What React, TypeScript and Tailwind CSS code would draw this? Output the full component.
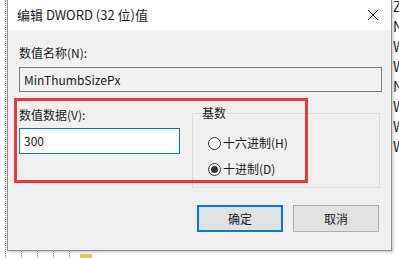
import React from 'react';

const font = "font-['Noto_Sans_CJK_SC','Noto_Sans',sans-serif]";

const Radio = ({ label, checked }: { label: string; checked?: boolean }) => (
  <div className="flex items-center h-[16px]">
    <span className="w-[13px] h-[13px] rounded-full border border-[#333333] bg-white flex items-center justify-center">
      {checked && <span className="w-[7px] h-[7px] rounded-full bg-[#333333]" />}
    </span>
    <span className="ml-[2px] text-[12px] leading-[16px] text-[#1a1a1a]">{label}</span>
  </div>
);

export default function App() {
  const sideLetters = ['Z', 'N', 'W', 'W', 'N', 'W', 'W', 'W'];

  return (
    <div className={`relative w-[399px] h-[258px] overflow-hidden bg-white ${font}`}>
      {/* tree view behind the dialog */}
      <div className="absolute left-[5px] top-0 h-full border-l border-dotted border-[#8a8a8a]" />
      <div className="absolute left-0 top-[251px] w-[120px] h-[7px] flex">
        <span className="ml-[21px] border-l border-dotted border-[#8a8a8a]" />
        <span className="ml-[15px] border-l border-dotted border-[#8a8a8a]" />
        <span className="ml-[15px] border-l border-dotted border-[#8a8a8a]" />
        <span className="ml-[15px] border-l border-dotted border-[#8a8a8a]" />
        <span className="ml-[10px] mt-[3px] w-[12px] h-[4px] bg-[#e8c45a]" />
      </div>
      <div className="absolute left-[392px] top-[-4px] w-[7px] h-[262px] overflow-hidden flex flex-col">
        {sideLetters.map((l, i) => (
          <span key={i} className="ml-[1px] h-[20px] text-[14px] leading-[20px] text-[#222]">
            {l}
          </span>
        ))}
      </div>

      {/* dialog window */}
      <div className="absolute left-[7px] top-0 w-[385px] h-[251px] border-x border-b border-[#8c8c8c] bg-[#f0f0f0] shadow-[1px_1px_3px_rgba(0,0,0,0.25)] flex flex-col">
        <div className="h-[30px] bg-white flex items-center justify-between pl-[9px] pr-[10px]">
          <span className="text-[13px] text-[#1a1a1a]">编辑 DWORD (32 位)值</span>
          <svg width="12" height="12" viewBox="0 0 12 12" className="mr-[2px]">
            <path d="M1 1 L11 11 M11 1 L1 11" stroke="#222" strokeWidth="1" />
          </svg>
        </div>

        <div className="flex flex-col px-[11px]">
          <div className="mt-[15px] text-[12px] leading-[16px] text-[#1a1a1a]">数值名称(N):</div>
          <div className="mt-[6px] h-[25px] w-[363px] border border-[#7a7a7a] bg-[#f0f0f0] flex items-center px-[4px] text-[12px] text-[#1a1a1a]">
            MinThumbSizePx
          </div>

          <div className="flex mt-[21px]">
            <div className="flex flex-col w-[162px]">
              <div className="mt-[-6px] text-[12px] leading-[16px] text-[#1a1a1a]">数值数据(V):</div>
              <div className="mt-[5px] h-[26px] border border-[#0078d7] bg-white flex items-center px-[4px] text-[12px] text-[#1a1a1a]">
                300
              </div>
            </div>
            <div className="ml-[12px] w-[189px] h-[75px] border border-[#dcdcdc] flex flex-col pl-[15px]">
              <span className="relative top-[-9px] -ml-[7px] self-start px-[1px] bg-[#f0f0f0] text-[12px] leading-[16px] text-[#1a1a1a]">
                基数
              </span>
              <div className="mt-[5px] flex flex-col gap-[10px]">
                <Radio label="十六进制(H)" />
                <Radio label="十进制(D)" checked />
              </div>
            </div>
          </div>

          <div className="flex justify-end gap-[10px] mt-[17px] pr-[1px]">
            <button className="w-[86px] h-[27px] border-2 border-[#0078d7] bg-[#e1e1e1] text-[12px] text-[#1a1a1a]">确定</button>
            <button className="w-[86px] h-[27px] border border-[#adadad] bg-[#e1e1e1] text-[12px] text-[#1a1a1a]">取消</button>
          </div>
        </div>

        {/* highlight annotation */}
        <div className="absolute left-[6px] top-[98px] w-[294px] h-[85px] border-[3px] border-[#e23b40] pointer-events-none" />
      </div>
    </div>
  );
}
